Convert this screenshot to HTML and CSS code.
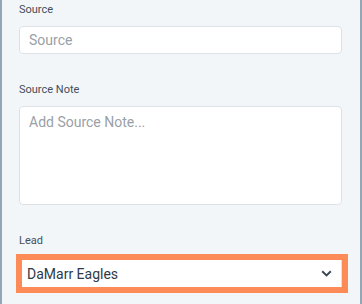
FILE: index.html
```html
<!DOCTYPE html>
<html lang="en">
<head>
  <meta charset="UTF-8">
  <title>Source</title>
  <link rel="stylesheet" href="styles.css">
</head>
<body>
  <div class="panel">
    <div class="field">
      <label class="field-label">Source</label>
      <input class="text-input" type="text" placeholder="Source">
    </div>

    <div class="field">
      <label class="field-label">Source Note</label>
      <textarea class="text-area" placeholder="Add Source Note..."></textarea>
    </div>

    <div class="field">
      <label class="field-label">Lead</label>
      <div class="highlight">
        <div class="select-box">
          <span class="select-value">DaMarr Eagles</span>
          <svg class="chevron" width="11" height="7" viewBox="0 0 11 7">
            <path d="M1.2 1.2 L5.5 5.4 L9.8 1.2" fill="none" stroke="#3b4656" stroke-width="2"/>
          </svg>
        </div>
      </div>
    </div>
  </div>
</body>
</html>
```

FILE: styles.css
```css
body {
  margin: 0;
  font-family: "Roboto", "Liberation Sans", sans-serif;
}

.panel {
  background-color: #f3f6f9;
  border-left: 2px solid #95a5b8;
  border-right: 2px solid #95a5b8;
  height: 304px;
  box-sizing: border-box;
  padding: 3px 18px 0 17px;
}

.field {
  display: flex;
  flex-direction: column;
  margin-bottom: 29px;
}

.field-label {
  font-size: 11px;
  line-height: 14px;
  color: #454e5a;
  margin-bottom: 9px;
}

.text-input,
.text-area {
  box-sizing: border-box;
  width: 100%;
  border: 1px solid #dde2e8;
  border-radius: 4px;
  background-color: #fff;
  font-family: inherit;
  font-size: 14px;
  color: #333;
  padding: 0 9px;
  margin: 0;
  outline: none;
}

.text-input {
  height: 28px;
}

.text-area {
  height: 99px;
  padding-top: 7px;
  resize: none;
  display: block;
}

.text-input::placeholder,
.text-area::placeholder {
  color: #9aa0a7;
}

/* orange highlight round the lead select */
.highlight {
  margin: -3px -6px 0 -3px;
  border: 6px solid #fd8b57;
}

.select-box {
  display: flex;
  align-items: center;
  justify-content: space-between;
  height: 27px;
  background-color: #fff;
  border-right: 1px solid #dde2e8;
  padding: 0 9px 0 5px;
}

.select-value {
  font-size: 14px;
  color: #2f3a48;
}

.chevron {
  display: block;
}
```
